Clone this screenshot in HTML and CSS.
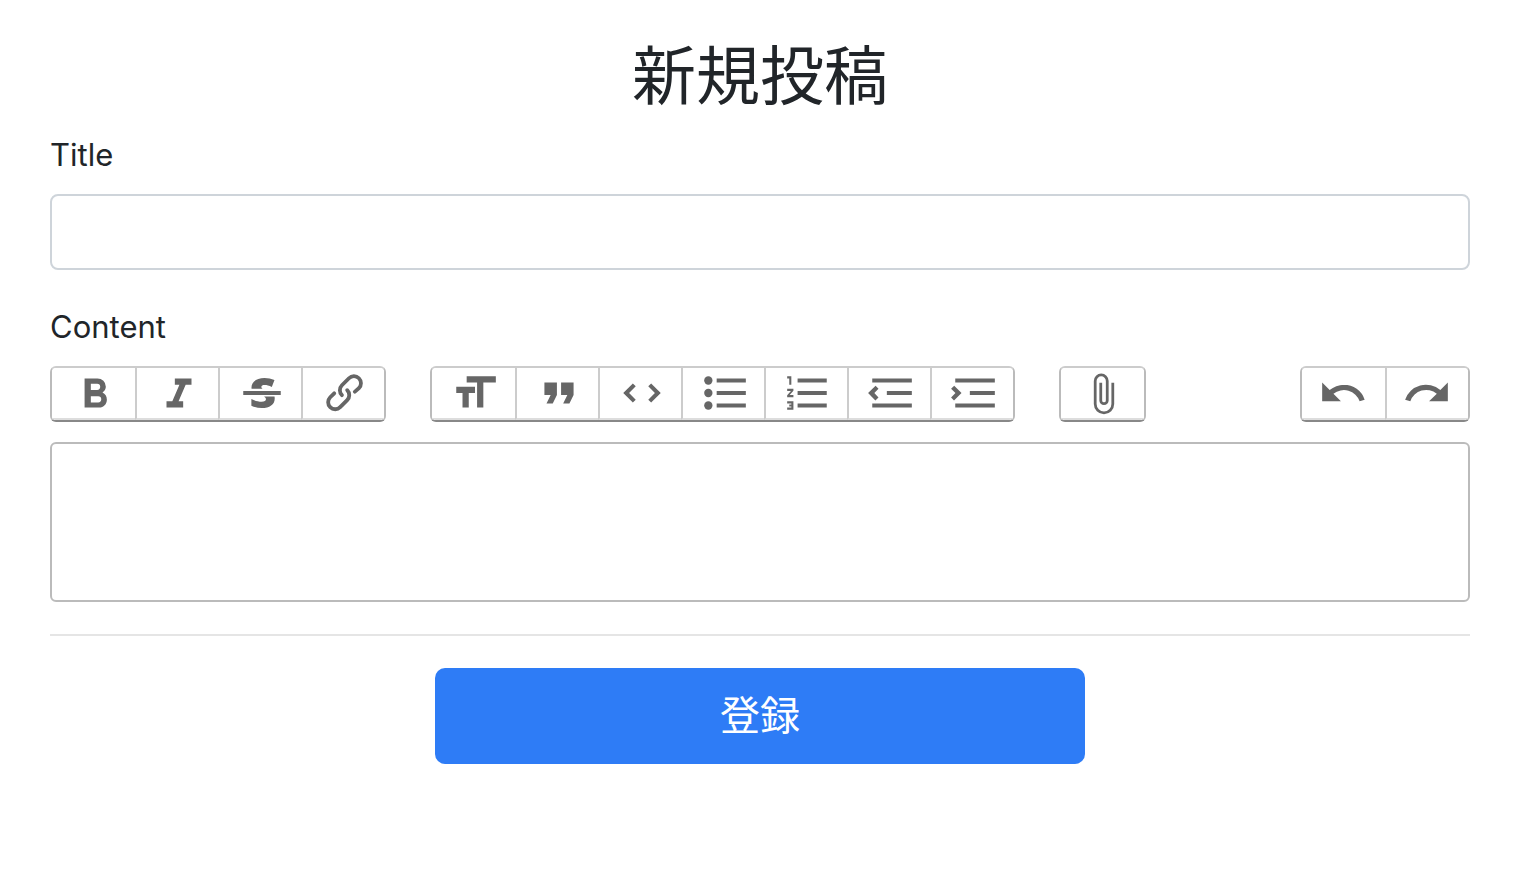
FILE: index.html
```html
<!DOCTYPE html>
<html lang="ja">
<head>
<meta charset="utf-8">
<meta name="viewport" content="width=device-width, initial-scale=1">
<title>新規投稿</title>
<link rel="stylesheet" href="styles.css">
</head>
<body>
<main class="page">
  <h1 class="heading">新規投稿</h1>
  <form class="form">
    <label class="label" for="title">Title</label>
    <input class="field" id="title" type="text">
    <label class="label" for="content">Content</label>
    <div class="toolbar">
      <div class="group">
        <button class="tool" type="button" aria-label="Bold"><svg class="icon" viewBox="0 0 24 24"><path fill-rule="evenodd" d="M15.6 11.8c1-.7 1.6-1.8 1.6-2.8a4 4 0 0 0-4-4H7v14h7c2.1 0 3.7-1.7 3.7-3.8 0-1.5-.8-2.8-2.1-3.4zM10 7.5h3a1.5 1.5 0 1 1 0 3h-3v-3zm3.5 9H10v-3h3.5a1.5 1.5 0 1 1 0 3z"/></svg></button>
        <button class="tool" type="button" aria-label="Italic"><svg class="icon" viewBox="0 0 24 24"><path d="M10 5v3h2.2l-3.4 8H6v3h8v-3h-2.2l3.4-8H18V5h-8z"/></svg></button>
        <button class="tool" type="button" aria-label="Strikethrough"><svg class="icon" viewBox="0 0 24 24"><path d="M13 13.700h5c.1.400.1.700.1 1 0 2.800-2.500 4.500-6.200 4.500-1.800 0-3.500-.4-5-1.100v-3.200c1.500.8 3.300 1.300 4.900 1.300 1.400 0 2.100-.5 2.100-1.200 0-.5-.3-.9-.9-1.300zM7 10c-.4-3 2.100-5.200 6.200-5.200 1.700 0 3.300.4 4.800 1l-1.300 3.300c-1.300-.6-2.400-.9-3.400-.9-1 0-1.600.3-1.600.9 0 .3.200.6.700.9zM3 11h18v2H3z"/></svg></button>
        <button class="tool" type="button" aria-label="Link"><svg class="icon" viewBox="0 0 24 24"><path d="M9.88 13.7a4.3 4.3 0 0 1 0-6.07l3.37-3.37a4.26 4.26 0 0 1 6.07 0 4.3 4.3 0 0 1 0 6.06l-1.96 1.72a.91.91 0 1 1-1.3-1.3l1.97-1.71a2.46 2.46 0 0 0-3.48-3.48l-3.38 3.37a2.46 2.46 0 0 0 0 3.48.91.91 0 1 1-1.3 1.3z"/><path d="M4.25 19.46a4.3 4.3 0 0 1 0-6.07l1.93-1.9a.91.91 0 1 1 1.3 1.3l-1.93 1.9a2.46 2.46 0 0 0 3.48 3.48l3.37-3.38c.96-.96.96-2.52 0-3.48a.91.91 0 1 1 1.3-1.3 4.3 4.3 0 0 1 0 6.07l-3.38 3.38a4.26 4.26 0 0 1-6.07 0z"/></svg></button>
      </div>
      <div class="group">
        <button class="tool" type="button" aria-label="Heading"><svg class="icon" viewBox="0 0 24 24"><path d="M8 4v3h5v12h3V7h6V4zM3 12h3v7h3v-7h3V9H3z"/></svg></button>
        <button class="tool" type="button" aria-label="Quote"><svg class="icon" viewBox="0 0 24 24"><path d="M6 17h3l2-4V7H5v6h3zm8 0h3l2-4V7h-6v6h3z"/></svg></button>
        <button class="tool" type="button" aria-label="Code"><svg class="icon" viewBox="0 0 24 24"><path d="M18.2 12L15 15.2l1.4 1.4L21 12l-4.6-4.6L15 8.8zM5.8 12L9 8.8 7.6 7.4 3 12l4.6 4.6L9 15.2z"/></svg></button>
        <button class="tool" type="button" aria-label="Bullets"><svg class="icon" viewBox="0 0 24 24"><circle cx="4" cy="6" r="2"/><circle cx="4" cy="12" r="2"/><circle cx="4" cy="18" r="2"/><path d="M8 5h14v2H8zM8 11h14v2H8zM8 17h14v2H8z"/></svg></button>
        <button class="tool" type="button" aria-label="Numbers"><svg class="icon" viewBox="0 0 24 24"><path d="M2 17h2v.5H3v1h1v.5H2v1h3v-4H2v1zm1-9h1V4H2v1h1v3zm-1 3h1.8L2 13.1v.9h3v-1H3.2L5 10.9V10H2v1zm5-6v2h14V5H7zm0 14h14v-2H7v2zm0-6h14v-2H7v2z"/></svg></button>
        <button class="tool" type="button" aria-label="Decrease level"><svg class="icon" viewBox="0 0 24 24"><path d="M3 19h19v-2H3v2zm7-6h12v-2H10v2zm-8.3-.3l2.8 2.9L6 14.2 4 12l2-2-1.4-1.5L1 12l.7.7zM3 5v2h19V5H3z"/></svg></button>
        <button class="tool" type="button" aria-label="Increase level"><svg class="icon" viewBox="0 0 24 24"><path d="M3 19h19v-2H3v2zm7-6h12v-2H10v2zm-6.9-1L1 14.2l1.4 1.4L6 12l-.7-.7-2.8-2.8L1 9.9 3.1 12zM3 5v2h19V5H3z"/></svg></button>
      </div>
      <div class="group">
        <button class="tool" type="button" aria-label="Attach files"><svg class="icon" viewBox="-1 -2 27 27"><path d="M16.5 6v11.5a4 4 0 1 1-8 0V5a2.5 2.5 0 0 1 5 0v10.5a1 1 0 1 1-2 0V6H10v9.5a2.5 2.5 0 0 0 5 0V5a4 4 0 1 0-8 0v12.5a5.5 5.5 0 0 0 11 0V6h-1.5z"/></svg></button>
      </div>
      <div class="group group-history">
        <button class="tool" type="button" aria-label="Undo"><svg class="icon" viewBox="0 0 24 24"><path d="M12.5 8c-2.6 0-5 1-6.9 2.6L2 7v9h9l-3.6-3.6A8 8 0 0 1 20 16l2.4-.8a10.5 10.5 0 0 0-10-7.2z"/></svg></button>
        <button class="tool" type="button" aria-label="Redo"><svg class="icon" viewBox="0 0 24 24"><path d="M18.4 10.6a10.5 10.5 0 0 0-16.9 4.6L4 16a8 8 0 0 1 12.7-3.6L13 16h9V7l-3.6 3.6z"/></svg></button>
      </div>
    </div>
    <textarea class="editor" id="content"></textarea>
    <hr class="rule">
    <button class="submit" type="submit">登録</button>
  </form>
</main>
</body>
</html>
```
FILE: styles.css
```css
* {
  box-sizing: border-box;
}

body {
  margin: 0;
  background: #fff;
  color: #212529;
  font-family: Inter, "Noto Sans CJK JP", sans-serif;
  font-size: 31px;
  line-height: 48px;
}

.page {
  padding: 33px 50px;
}

.heading {
  margin: 0 0 22px;
  font-family: "Noto Sans CJK JP", sans-serif;
  font-size: 64px;
  font-weight: 400;
  line-height: 76px;
  text-align: center;
}

.form {
  display: flex;
  flex-direction: column;
}

.label {
  align-self: flex-start;
  margin-bottom: 15px;
}

.field {
  width: 100%;
  height: 76px;
  margin-bottom: 33px;
  padding: 12px 24px;
  border: 2px solid #ced4da;
  border-radius: 8px;
  color: inherit;
  font: inherit;
}

.toolbar {
  display: flex;
  flex-wrap: wrap;
  gap: 20px 44px;
  margin-bottom: 20px;
}

.group {
  display: flex;
  overflow: hidden;
  border: 2px solid #bbb;
  border-top-color: #ccc;
  border-bottom-color: #888;
  border-radius: 6px;
}

.tool {
  display: flex;
  align-items: center;
  justify-content: center;
  width: 83px;
  height: 52px;
  padding: 0 0 0 2px;
  border: 0;
  border-bottom: 2px solid #ddd;
  background: #fff;
}

.tool + .tool {
  border-left: 2px solid #ccc;
}

.group-history {
  margin-left: auto;
}

.group-history .tool {
  padding: 0 2px 0 0;
}

.icon {
  width: 50px;
  height: 50px;
  flex: none;
  fill: #666;
}

.editor {
  width: 100%;
  height: 160px;
  padding: 12px 20px;
  border: 2px solid #bbb;
  border-radius: 6px;
  color: inherit;
  font: inherit;
  resize: none;
}

.rule {
  width: 100%;
  margin: 32px 0;
  border: 0;
  border-top: 2px solid #e5e5e5;
}

.submit {
  align-self: center;
  width: 100%;
  max-width: 650px;
  padding: 15px 32px 21px;
  border: 0;
  border-radius: 10px;
  background: #2e7cf6;
  color: #fff;
  font-family: "Noto Sans CJK JP", sans-serif;
  font-size: 40px;
  line-height: 60px;
}
```
